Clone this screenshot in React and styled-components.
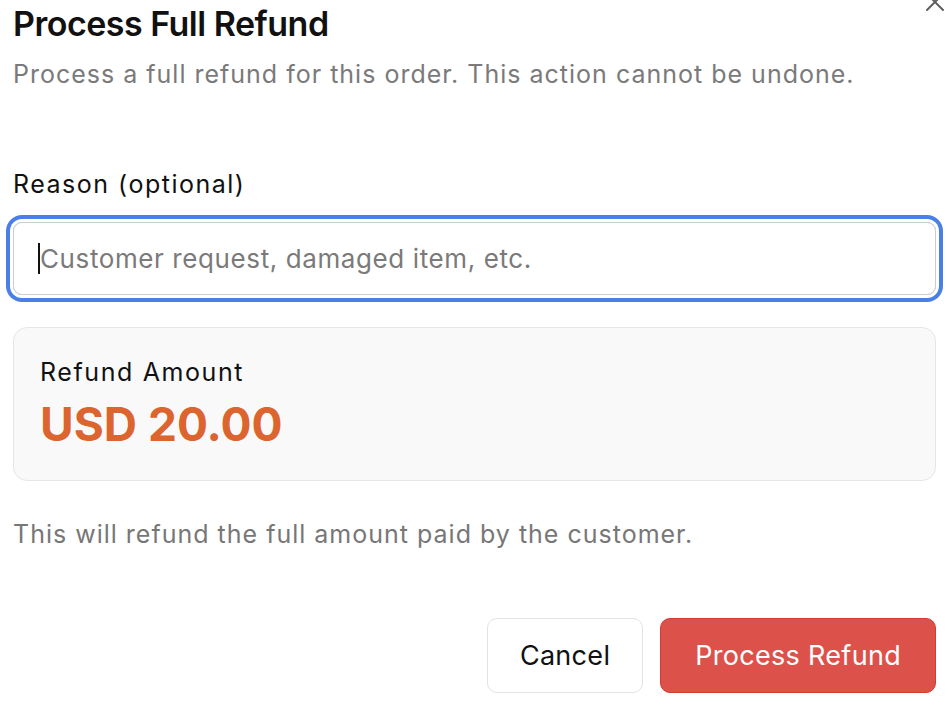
import React from "react";
import styled, { createGlobalStyle } from "styled-components";

const GlobalStyle = createGlobalStyle`
  html, body {
    margin: 0;
    padding: 0;
    background: #ffffff;
  }
  body {
    font-family: Inter, "Noto Sans", "Liberation Sans", sans-serif;
    color: #111111;
    -webkit-font-smoothing: antialiased;
  }
`;

const Dialog = styled.div`
  position: relative;
  width: 948px;
  height: 722px;
  box-sizing: border-box;
  padding: 4px 12px 0 13px;
  display: flex;
  flex-direction: column;
  overflow: hidden;
`;

const CloseButton = styled.button`
  position: absolute;
  top: -9px;
  right: 2px;
  width: 22px;
  height: 22px;
  padding: 0;
  border: none;
  background: transparent;
  color: #5f5f5f;
  display: flex;
  align-items: center;
  justify-content: center;
  cursor: pointer;
`;

const Title = styled.h2`
  margin: 0;
  font-size: 34px;
  line-height: 40px;
  font-weight: 600;
  letter-spacing: -0.5px;
  color: #111111;
`;

const Subtitle = styled.p`
  margin: 15px 0 0;
  font-size: 25px;
  line-height: 30px;
  letter-spacing: 1px;
  color: #7a7a7a;
`;

const Label = styled.label`
  display: block;
  margin-top: 80px;
  font-size: 25px;
  line-height: 30px;
  letter-spacing: 1.5px;
  color: #111111;
`;

const InputWrap = styled.div`
  position: relative;
  margin-top: 23px;
  border-radius: 9px;
  box-shadow: 0 0 0 3px #ffffff, 0 0 0 7px #4a7fe6;
`;

const Input = styled.input`
  display: block;
  width: 100%;
  box-sizing: border-box;
  height: 73px;
  padding: 0 24px 0 26px;
  border: 1.5px solid #cccccc;
  border-radius: 9px;
  font-family: inherit;
  font-size: 26px;
  letter-spacing: 0.6px;
  color: #111111;
  background: #ffffff;
  outline: none;
  caret-color: transparent;

  &::placeholder {
    color: #7a7a7a;
  }
`;

const Caret = styled.span`
  position: absolute;
  left: 25px;
  top: 21px;
  width: 2px;
  height: 31px;
  background: #111111;
  pointer-events: none;
`;

const AmountCard = styled.div`
  margin-top: 32px;
  box-sizing: border-box;
  height: 154px;
  padding: 29px 26px 0;
  background: #f9f9f9;
  border: 1.5px solid #e6e6e6;
  border-radius: 14px;
`;

const AmountLabel = styled.div`
  font-size: 25px;
  line-height: 30px;
  letter-spacing: 1.6px;
  color: #111111;
`;

const AmountValue = styled.div`
  margin-top: 10px;
  font-size: 46px;
  line-height: 54px;
  font-weight: 700;
  color: #dc642e;
`;

const Note = styled.p`
  margin: 38px 0 0;
  font-size: 25px;
  line-height: 30px;
  letter-spacing: 1px;
  color: #777777;
`;

const Footer = styled.div`
  margin-top: 69px;
  display: flex;
  justify-content: flex-end;
  gap: 17px;
`;

const Button = styled.button`
  box-sizing: border-box;
  height: 75px;
  padding: 0 ${({ $danger }) => ($danger ? "34px" : "32px")};
  border-radius: 10px;
  font-family: inherit;
  font-size: 27px;
  letter-spacing: 0.3px;
  cursor: pointer;
  border: 1.5px solid ${({ $danger }) => ($danger ? "#d33b33" : "#e3e3e3")};
  background: ${({ $danger }) => ($danger ? "#dc524b" : "#ffffff")};
  color: ${({ $danger }) => ($danger ? "#ffffff" : "#111111")};
`;

export default function App() {
  return (
    <>
      <GlobalStyle />
      <Dialog>
        <CloseButton aria-label="Close">
          <svg width="20" height="20" viewBox="0 0 20 20" fill="none">
            <path
              d="M2 2L18 18M18 2L2 18"
              stroke="currentColor"
              strokeWidth="2"
              strokeLinecap="round"
            />
          </svg>
        </CloseButton>
        <Title>Process Full Refund</Title>
        <Subtitle>
          Process a full refund for this order. This action cannot be undone.
        </Subtitle>
        <Label htmlFor="reason">Reason (optional)</Label>
        <InputWrap>
          <Input id="reason" placeholder="Customer request, damaged item, etc." />
          <Caret />
        </InputWrap>
        <AmountCard>
          <AmountLabel>Refund Amount</AmountLabel>
          <AmountValue>USD 20.00</AmountValue>
        </AmountCard>
        <Note>This will refund the full amount paid by the customer.</Note>
        <Footer>
          <Button>Cancel</Button>
          <Button $danger>Process Refund</Button>
        </Footer>
      </Dialog>
    </>
  );
}
